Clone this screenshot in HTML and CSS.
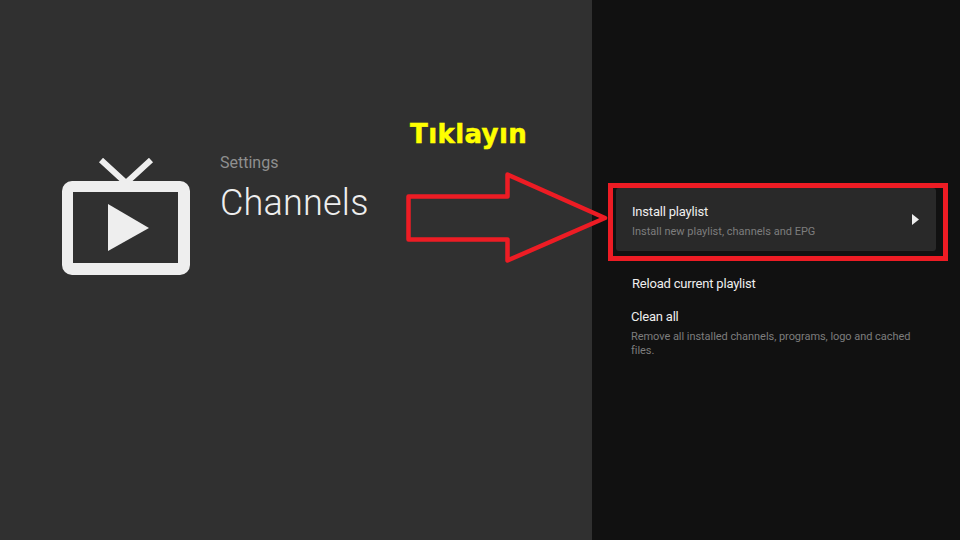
FILE: index.html
```html
<!DOCTYPE html>
<html lang="en">
<head>
    <meta charset="UTF-8">
    <meta name="viewport" content="width=device-width, initial-scale=1.0">
    <title>Channels</title>
    <link rel="stylesheet" href="styles.css">
</head>
<body>
    <div class="screen">
        <div class="guide">
            <svg class="guide-icon" width="128" height="118" viewBox="0 0 128 118">
                <path d="M39 2 L64 25 L89 2" fill="none" stroke="#eeeeee" stroke-width="6"/>
                <path d="M0 33 a10 10 0 0 1 10 -10 H118 a10 10 0 0 1 10 10 V107 a10 10 0 0 1 -10 10 H10 a10 10 0 0 1 -10 -10 Z M11 34 V105 H116 V34 Z" fill="#eeeeee" fill-rule="evenodd"/>
                <path d="M46 46 L87 70 L46 93 Z" fill="#eeeeee"/>
            </svg>
            <div class="guide-text">
                <div class="guide-breadcrumb">Settings</div>
                <div class="guide-title">Channels</div>
            </div>
        </div>
        <div class="actions">
            <div class="action action-focused">
                <div class="action-body">
                    <div class="action-title">Install playlist</div>
                    <div class="action-desc">Install new playlist, channels and EPG</div>
                </div>
                <svg class="action-chevron" width="7" height="11" viewBox="0 0 7 11">
                    <path d="M0 0 L7 5.5 L0 11 Z" fill="#eeeeee"/>
                </svg>
            </div>
            <div class="action action-reload">
                <div class="action-title">Reload current playlist</div>
            </div>
            <div class="action action-clean">
                <div class="action-title">Clean all</div>
                <div class="action-desc">Remove all installed channels, programs, logo and cached files.</div>
            </div>
        </div>

        <!-- annotation drawn over the screenshot -->
        <div class="note-label">Tıklayın</div>
        <svg class="note-arrow" width="210" height="100" viewBox="0 0 210 100">
            <path d="M3.5 25.5 H102.5 V3.5 L200 47 L102.5 89.5 V68.5 H3.5 Z" fill="none" stroke="#ed1c24" stroke-width="4.5" stroke-linejoin="round"/>
        </svg>
        <div class="note-box"></div>
    </div>
</body>
</html>
```

FILE: styles.css
```css
body {
    margin: 0;
    font-family: Roboto, "Liberation Sans", sans-serif;
}
.screen {
    position: relative;
    display: flex;
    width: 960px;
    height: 540px;
    overflow: hidden;
    background-color: #111111;
}
.guide {
    display: flex;
    align-items: flex-start;
    gap: 30px;
    width: 592px;
    box-sizing: border-box;
    padding: 158px 0 0 62px;
    background-color: #303030;
}
.guide-icon {
    flex: none;
}
.guide-breadcrumb {
    margin-top: -5px;
    font-size: 16px;
    line-height: 20px;
    color: #8f8f8f;
}
.guide-title {
    margin-top: 9px;
    font-size: 36px;
    font-weight: 300;
    line-height: 42px;
    letter-spacing: 0.2px;
    color: #eeeeee;
}
.actions {
    flex: 1;
    padding-top: 188px;
}
.action {
    width: 320px;
    margin-left: 24px;
    box-sizing: border-box;
    padding: 0 16px;
}
.action-focused {
    display: flex;
    align-items: center;
    justify-content: space-between;
    height: 63px;
    border-radius: 3px;
    background-color: #292929;
}
.action-body {
    margin-top: 2px;
}
.action-reload {
    margin-top: 23px;
}
.action-clean {
    width: 310px;
    margin-top: 13px;
    padding: 0 0 0 15px;
}
.action-title {
    font-size: 13px;
    line-height: 20px;
    letter-spacing: -0.2px;
    color: #eeeeee;
}
.action-desc {
    font-size: 11px;
    line-height: 14px;
    color: #7d7d7d;
}
.action-body .action-desc {
    margin-top: 3px;
}
.action-clean .action-desc {
    margin-top: 3px;
    letter-spacing: -0.05px;
}
.action-chevron {
    margin-right: 1px;
}
.note-label {
    position: absolute;
    left: 410px;
    top: 119px;
    font-family: "DejaVu Sans", sans-serif;
    font-size: 26px;
    font-weight: 700;
    line-height: 30px;
    letter-spacing: 0.4px;
    color: #ffff00;
    -webkit-text-stroke: 0.5px #ffff00;
}
.note-arrow {
    position: absolute;
    left: 405px;
    top: 171px;
}
.note-box {
    position: absolute;
    left: 608px;
    top: 183px;
    width: 340px;
    height: 78px;
    box-sizing: border-box;
    border: 5px solid #ed1c24;
}
```
